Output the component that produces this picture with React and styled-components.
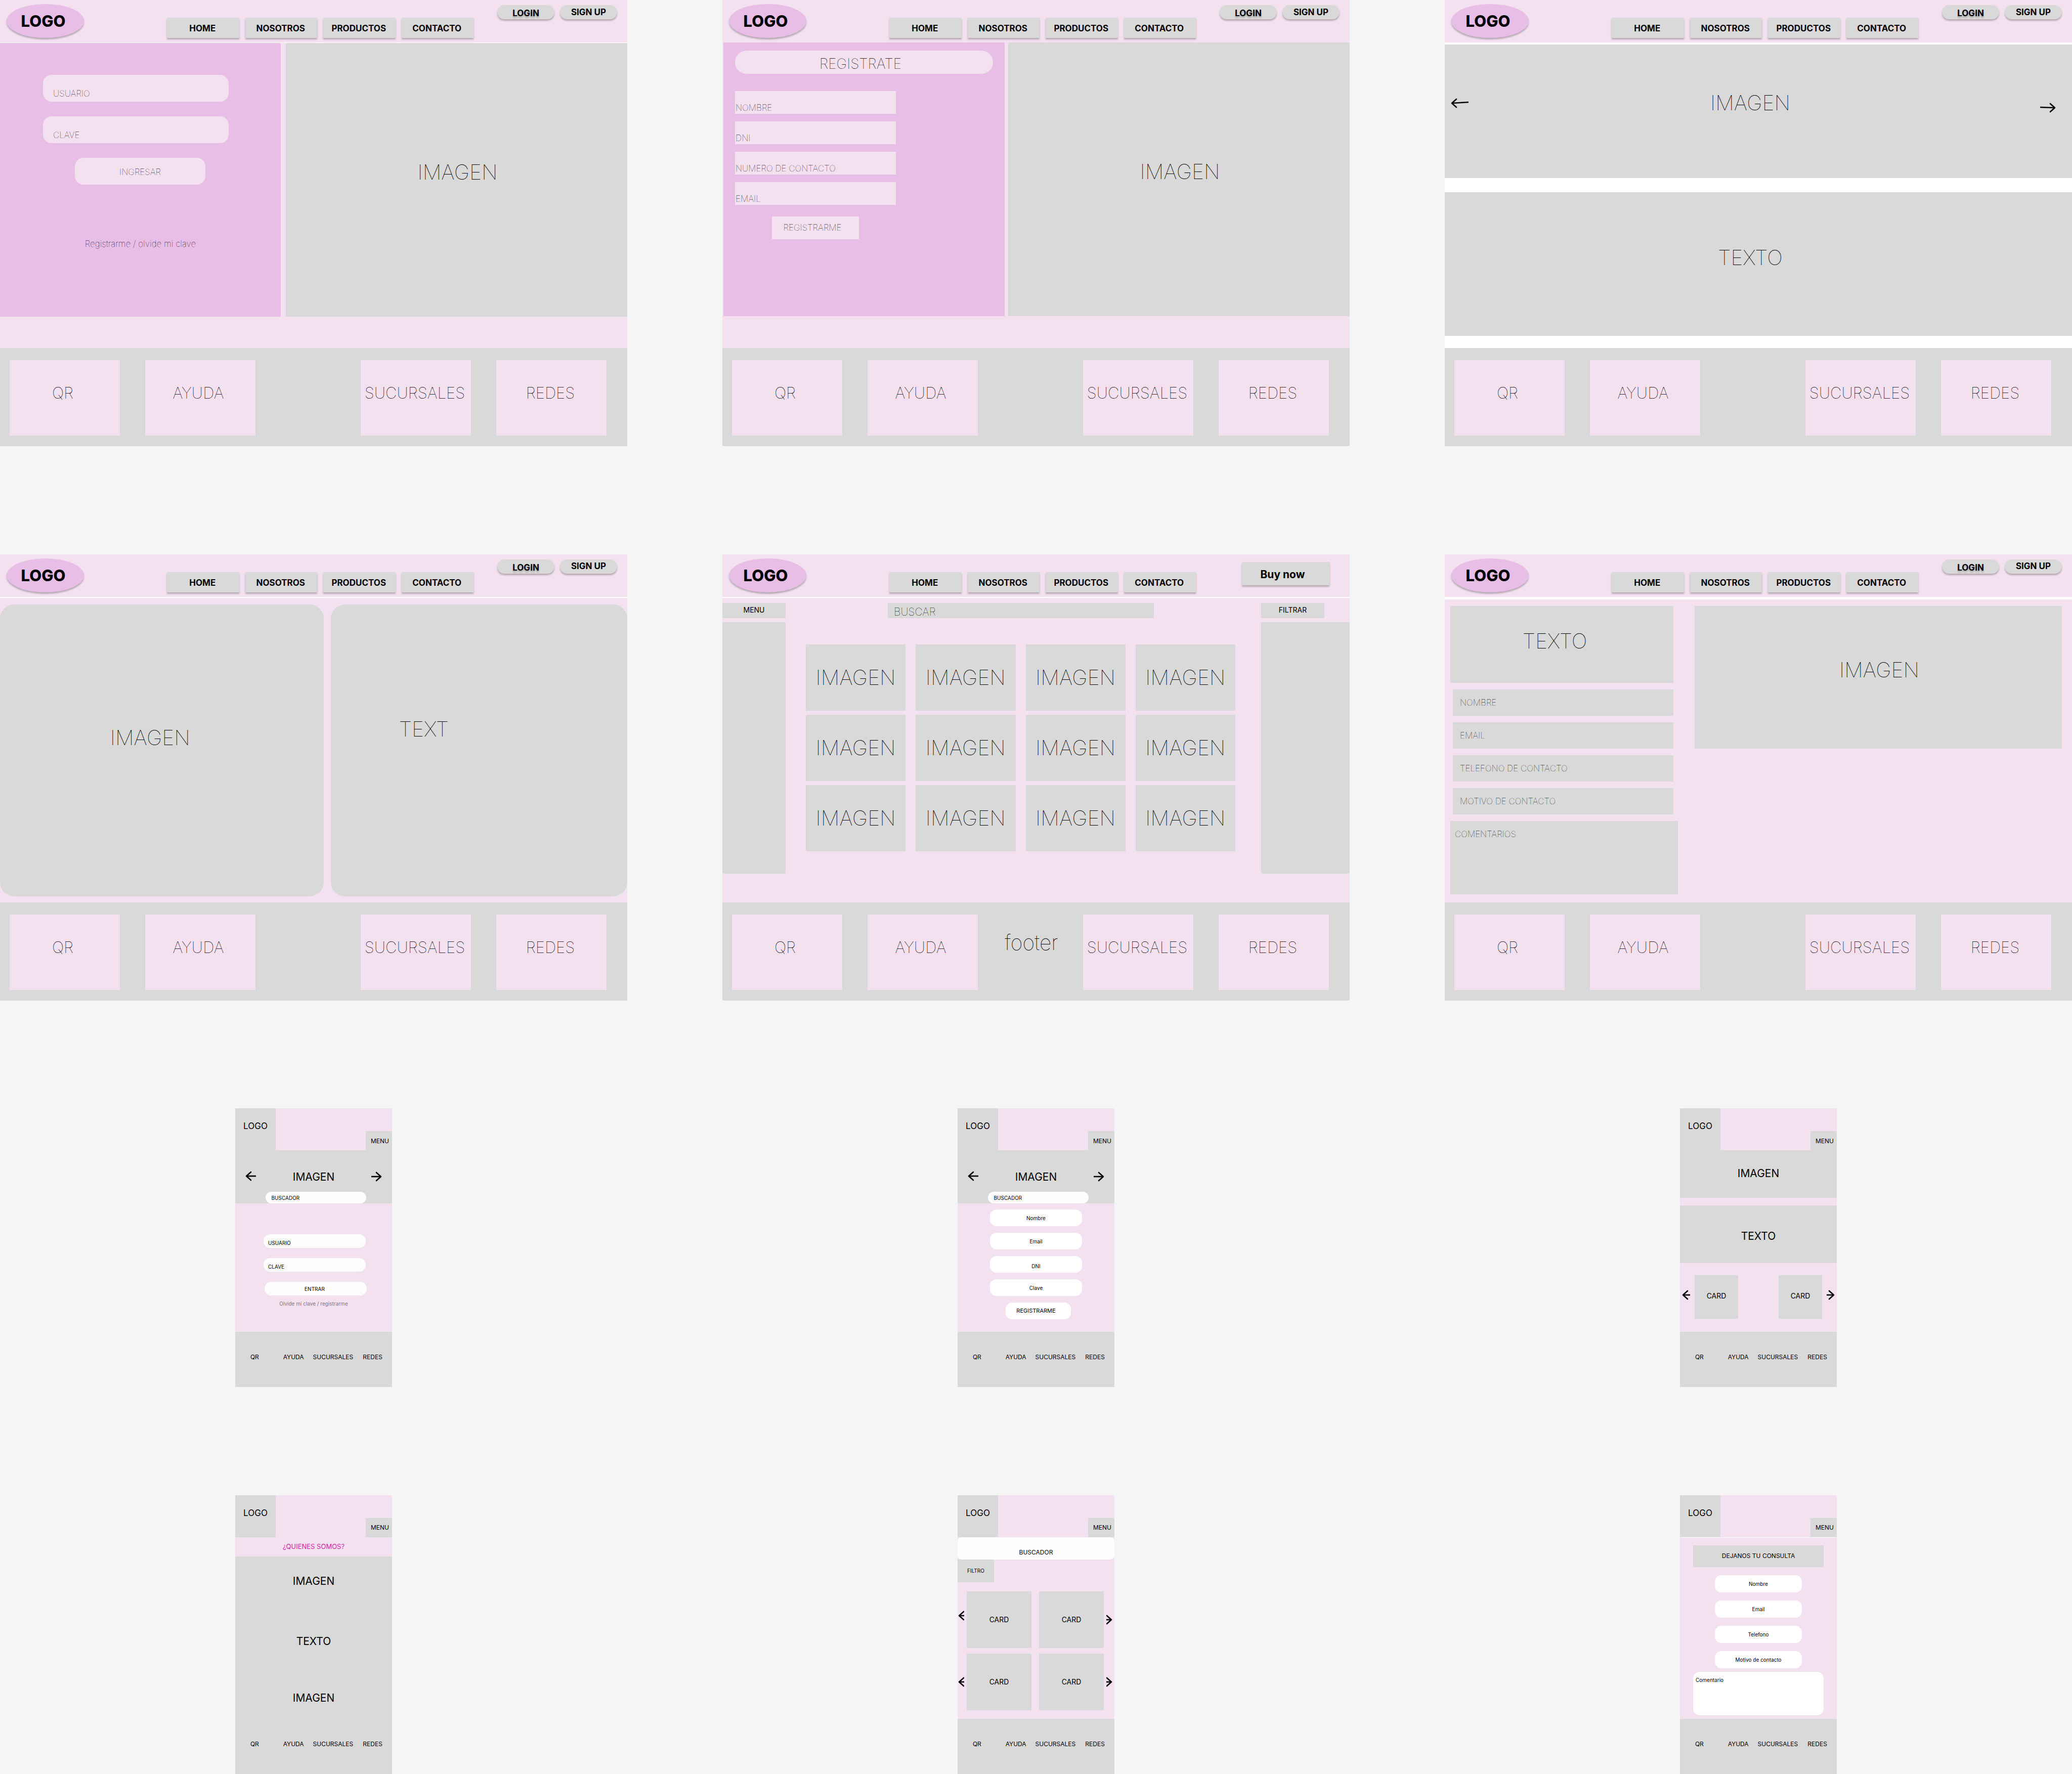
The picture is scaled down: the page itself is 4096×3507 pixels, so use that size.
import React from "react";
import styled, { createGlobalStyle, css } from "styled-components";

const color = {
  canvas: "#f5f5f5",
  pink: "#f4e1f0",
  orchid: "#e8bde6",
  gray: "#d9d9d9",
  magenta: "#d21da5",
  white: "#ffffff",
  ink: "#000000",
};

const shadow = "0 3px 3px rgba(0, 0, 0, 0.25)";

const GlobalStyle = createGlobalStyle`
  *, *::before, *::after { box-sizing: border-box; }
  body {
    margin: 0;
    background: ${color.canvas};
    color: ${color.ink};
    font-family: Inter, "Liberation Sans", sans-serif;
    line-height: 1.2;
  }
  p, h1, h2 { margin: 0; font-weight: inherit; font-size: inherit; }
  a { color: inherit; text-decoration: none; }
  button, input, textarea {
    font: inherit;
    color: inherit;
    border: 0;
    border-radius: 0;
    margin: 0;
    padding: 0;
    background: none;
  }
  input::-webkit-search-cancel-button { display: none; }
`;

/* ---------- shared canvas ---------- */

const Board = styled.div`
  min-height: 100vh;
  display: grid;
  grid-template-columns: repeat(3, minmax(0, 1fr));
  column-gap: 188px;
  align-content: space-between;
  justify-items: center;
`;

const placeholderInk = css`
  &::placeholder {
    color: ${color.ink};
    opacity: 1;
  }
`;

/* ---------- desktop parts ---------- */

const Desktop = styled.section`
  width: 100%;
  min-height: 882px;
  display: flex;
  flex-direction: column;
  background: ${(p) => p.$fill || color.pink};
`;

const TopBar = styled.header`
  display: flex;
  align-items: flex-start;
  box-sizing: content-box;
  height: 76px;
  padding: 8px 20px 0 13px;
  background: ${color.pink};
  border-bottom: ${(p) => p.$rule}px solid ${color.white};
`;

const Logo = styled.a`
  display: flex;
  align-items: center;
  justify-content: center;
  width: 153px;
  height: 67px;
  padding-right: 8px;
  border-radius: 50%;
  background: ${color.orchid};
  box-shadow: ${shadow};
  font-size: 31px;
  font-weight: 800;
`;

const Nav = styled.nav`
  display: grid;
  grid-template-columns: repeat(4, 1fr);
  column-gap: 12px;
  flex: 0 1 606px;
  margin: 27px 0 0 164px;
`;

const NavLink = styled.a`
  display: flex;
  align-items: center;
  justify-content: center;
  height: 40px;
  padding: 3px 2px 0 0;
  background: ${color.gray};
  box-shadow: ${shadow};
  font-size: 17px;
  font-weight: 700;
`;

const Session = styled.div`
  display: flex;
  gap: 11px;
  margin: 2px 0 0 auto;
`;

const Pill = styled.button`
  width: 113px;
  height: 28px;
  border-radius: 14px;
  background: ${color.gray};
  box-shadow: ${shadow};
  font-size: 17px;
  font-weight: 700;
  ${(p) =>
    p.$raised &&
    css`
      padding-top: 5px;
      text-shadow: ${shadow};
    `}
`;

const BuyButton = styled.button`
  width: 173px;
  height: 46px;
  margin: 7px 20px 0 auto;
  padding: 3px 12px 0 0;
  background: ${color.gray};
  box-shadow: ${shadow};
  font-size: 21px;
  font-weight: 700;
`;

const Block = styled.div`
  display: flex;
  align-items: center;
  justify-content: center;
  flex: ${(p) => p.$grow || "none"};
  height: ${(p) => (p.$height ? `${p.$height}px` : "auto")};
  padding: ${(p) => p.$pad || "0"};
  border-radius: ${(p) => p.$radius || 0}px;
  background: ${color.gray};
`;

const Display = styled.p`
  font-size: 41px;
  font-weight: 100;
`;

const BottomBar = styled.footer`
  display: flex;
  justify-content: space-between;
  align-items: flex-start;
  height: 194px;
  margin-top: auto;
  padding: 24px 41px 0 19px;
  background: ${color.gray};
`;

const TileGroup = styled.div`
  display: flex;
  gap: 50px;
  --inset: ${(p) => p.$inset}px;
`;

const Tile = styled.a`
  display: flex;
  align-items: center;
  justify-content: center;
  width: 218px;
  height: 149px;
  padding: 0 var(--inset) 20px 0;
  background: ${color.pink};
  font-size: 31px;
  font-weight: 100;
`;

const FooterWord = styled(Display)`
  padding: 31px 0 0 4px;
`;

const Split = styled.main`
  display: flex;
  gap: ${(p) => p.$gap}px;
  padding: ${(p) => p.$pad || "0"};
`;

const Halves = styled.main`
  display: grid;
  grid-template-columns: minmax(0, 12fr) minmax(0, 11fr);
  column-gap: 14px;
  padding-top: 13px;
`;

const Panel = styled.form`
  display: flex;
  flex-direction: column;
  align-items: flex-start;
  flex: 0 0 ${(p) => p.$width}px;
  min-height: 541px;
  padding: ${(p) => p.$pad};
  background: ${color.orchid};
`;

const Stack = styled.div`
  display: flex;
  flex-direction: column;
  gap: ${(p) => p.$gap}px;
`;

const Input = styled.input`
  width: ${(p) => p.$width}px;
  height: ${(p) => p.$height}px;
  padding: ${(p) => p.$pad};
  border-radius: ${(p) => p.$radius || 0}px;
  background: ${(p) => p.$fill || color.pink};
  font-size: 17px;
  font-weight: 100;
  ${placeholderInk}
`;

const FormButton = styled.button`
  width: ${(p) => p.$width}px;
  height: ${(p) => p.$height}px;
  margin: ${(p) => p.$margin};
  padding: ${(p) => p.$pad || "0"};
  border-radius: ${(p) => p.$radius || 0}px;
  background: ${color.pink};
  font-size: 17px;
  font-weight: 100;
`;

const HelpLink = styled.a`
  margin: 107px auto 0;
  font-size: 17px;
  font-weight: 100;
`;

const FormTitle = styled.h2`
  display: flex;
  align-items: center;
  justify-content: center;
  width: 510px;
  height: 46px;
  margin-bottom: 34px;
  padding: 8px 14px 0 0;
  border-radius: 23px;
  background: ${color.pink};
  font-size: 28px;
  font-weight: 100;
`;

const Banners = styled.main`
  display: flex;
  flex-direction: column;
  gap: 28px;
`;

const Carousel = styled(Block)`
  justify-content: space-between;
  & > p {
    flex: 1;
    text-align: center;
    padding-right: 16px;
  }
`;

const ArrowButton = styled.button`
  display: flex;
  line-height: 0;
`;

const Shop = styled.main`
  display: grid;
  grid-template-columns: 125px 1fr 175px;
  gap: 8px 0;
  padding-top: 10px;
`;

const SmallButton = styled.button`
  width: 125px;
  height: 30px;
  background: ${color.gray};
  font-size: 14px;
`;

const Search = styled.input`
  width: 526px;
  height: 30px;
  margin-left: 202px;
  padding: 5px 12px 0;
  background: ${color.gray};
  font-size: 21px;
  font-weight: 100;
  ${placeholderInk}
`;

const Aside = styled.aside`
  height: 497px;
  background: ${color.gray};
`;

const Products = styled.div`
  display: grid;
  grid-template-columns: repeat(4, 1fr);
  align-content: start;
  gap: 8px 20px;
  padding: 44px 51px 0 40px;
`;

const ContactForm = styled.form`
  display: flex;
  flex-direction: column;
  gap: 13px;
  flex: 0 0 450px;
`;

const Intro = styled(Block)`
  margin-right: 9px;
`;

const ContactInput = styled(Input)`
  margin-left: 5px;
`;

const Comments = styled.textarea`
  height: 145px;
  padding: 16px 9px;
  background: ${color.gray};
  font-size: 17px;
  font-weight: 100;
  resize: none;
  ${placeholderInk}
`;

/* ---------- mobile parts ---------- */

const Mobile = styled.section`
  width: 310px;
  min-height: 551px;
  display: flex;
  flex-direction: column;
  background: ${color.pink};
`;

const MobileBar = styled.header`
  display: flex;
  align-items: flex-end;
  justify-content: space-between;
  border-bottom: ${(p) => p.$rule || 0}px solid ${color.white};
`;

const MobileLogo = styled.a`
  display: flex;
  align-items: center;
  justify-content: center;
  width: 80px;
  height: 83px;
  padding-bottom: 13px;
  background: ${color.gray};
  font-size: 17px;
`;

const MobileMenu = styled.button`
  width: 52px;
  height: 38px;
  padding: 1px 0 0 4px;
  background: ${color.gray};
  font-size: 12px;
`;

const MobileFooter = styled.footer`
  display: grid;
  grid-template-columns: repeat(4, 1fr);
  align-items: center;
  justify-items: center;
  height: 109px;
  margin-top: auto;
  padding-bottom: 9px;
  background: ${color.gray};
  font-size: 12px;
`;

const Heading = styled.p`
  font-size: 21px;
`;

const Hero = styled.div`
  display: flex;
  flex-direction: column;
  align-items: center;
  justify-content: space-between;
  height: 105px;
  padding-top: 32px;
  background: ${color.gray};
`;

const HeroRow = styled.div`
  display: flex;
  align-items: center;
  justify-content: space-between;
  align-self: stretch;
  padding: 0 20px;
`;

const MobileInput = styled.input`
  width: ${(p) => p.$width}px;
  height: ${(p) => p.$height}px;
  padding: ${(p) => (p.$low ? "7px" : "0")} ${(p) => p.$inset || 8}px 0;
  border-radius: 13px;
  background: ${(p) => p.$fill || color.white};
  font-size: 10px;
  text-align: ${(p) => p.$align || "left"};
  ${placeholderInk}
`;

const HeroSearch = styled(MobileInput)`
  margin-left: 8px;
`;

const MobileForm = styled.form`
  display: flex;
  flex-direction: column;
  align-items: center;
  gap: ${(p) => p.$gap}px;
  padding: ${(p) => p.$pad};
`;

const MobileSubmit = styled.button`
  width: ${(p) => p.$width}px;
  height: ${(p) => p.$height}px;
  margin-left: ${(p) => p.$inset}px;
  padding-right: ${(p) => p.$inset}px;
  border-radius: 13px;
  background: ${(p) => p.$fill || color.white};
  font-size: ${(p) => p.$size || 10}px;
`;

const MobileHelp = styled.a`
  margin: -10px 4px 0 0;
  font-size: 10px;
  opacity: 0.5;
`;

const Cards = styled.div`
  display: flex;
  align-items: center;
  justify-content: space-between;
  padding: ${(p) => p.$pad};
`;

const Card = styled.div`
  display: flex;
  align-items: center;
  justify-content: center;
  width: ${(p) => p.$width}px;
  height: ${(p) => p.$height}px;
  padding-bottom: ${(p) => p.$lift || 0}px;
  background: ${color.gray};
  font-size: 14px;
`;

const CardPair = styled.div`
  display: flex;
  gap: ${(p) => p.$gap}px;
`;

const MobileBanners = styled.div`
  display: flex;
  flex-direction: column;
  gap: 15px;
`;

const About = styled.h2`
  display: flex;
  align-items: center;
  justify-content: center;
  height: 38px;
  color: ${color.magenta};
  font-size: 13px;
`;

const MobileSearch = styled.input`
  height: 44px;
  padding-top: 16px;
  border-radius: 8px;
  background: #fffdfd;
  font-size: 12px;
  text-align: center;
  ${placeholderInk}
`;

const Filter = styled.button`
  width: 72px;
  height: 45px;
  margin-bottom: 18px;
  background: ${color.gray};
  font-size: 10px;
`;

const CardRows = styled.div`
  display: flex;
  flex-direction: column;
  gap: 11px;
`;

const Ask = styled.h2`
  display: flex;
  align-items: center;
  justify-content: center;
  width: 258px;
  height: 43px;
  margin: 15px auto 0;
  background: ${color.gray};
  font-size: 12px;
`;

const MobileComment = styled.textarea`
  width: 258px;
  height: 86px;
  margin-top: -9px;
  padding: 10px 5px;
  border-radius: 13px;
  background: ${color.white};
  font-size: 10px;
  resize: none;
  ${placeholderInk}
`;

/* ---------- components ---------- */

/* Open-headed arrow; `shift` moves the drawing up or down in its own box. */
function Arrow({ dir, length = 20, shift = 0, tilt = 0 }) {
  const mid = 20 + shift;
  const left = dir === "left";
  const tip = left ? 2 : length - 2;
  const tail = left ? length : 0;
  const back = left ? tip + 9 : tip - 9;
  return (
    <svg width={length} height="40" viewBox={`0 0 ${length} 40`} fill="none" stroke="#000" strokeWidth="2.6">
      <path d={`M${tail} ${mid - tilt}L${tip} ${mid}`} />
      <path d={`M${back} ${mid - 8}L${tip} ${mid}L${back} ${mid + 8}`} strokeLinecap="round" strokeLinejoin="round" />
    </svg>
  );
}

function Slide({ dir, ...rest }) {
  return (
    <ArrowButton type="button" aria-label={dir === "left" ? "Anterior" : "Siguiente"}>
      <Arrow dir={dir} {...rest} />
    </ArrowButton>
  );
}

function Header({ rule = 0, shop = false }) {
  return (
    <TopBar $rule={rule}>
      <Logo href="#inicio">LOGO</Logo>
      <Nav>
        {["HOME", "NOSOTROS", "PRODUCTOS", "CONTACTO"].map((name) => (
          <NavLink key={name} href={`#${name.toLowerCase()}`}>
            {name}
          </NavLink>
        ))}
      </Nav>
      {shop ? (
        <BuyButton type="button">Buy now</BuyButton>
      ) : (
        <Session>
          <Pill type="button" $raised>
            LOGIN
          </Pill>
          <Pill type="button">SIGN UP</Pill>
        </Session>
      )}
    </TopBar>
  );
}

function Footer({ word }) {
  return (
    <BottomBar>
      <TileGroup $inset={8}>
        <Tile href="#qr">QR</Tile>
        <Tile href="#ayuda">AYUDA</Tile>
      </TileGroup>
      {word && <FooterWord>{word}</FooterWord>}
      <TileGroup $inset={4}>
        <Tile href="#sucursales">SUCURSALES</Tile>
        <Tile href="#redes">REDES</Tile>
      </TileGroup>
    </BottomBar>
  );
}

function MobileTop({ rule }) {
  return (
    <MobileBar $rule={rule}>
      <MobileLogo href="#inicio">LOGO</MobileLogo>
      <MobileMenu type="button">MENU</MobileMenu>
    </MobileBar>
  );
}

function MobileBottom() {
  return (
    <MobileFooter>
      {["QR", "AYUDA", "SUCURSALES", "REDES"].map((name) => (
        <a key={name} href={`#${name.toLowerCase()}`}>
          {name}
        </a>
      ))}
    </MobileFooter>
  );
}

function MobileHero() {
  return (
    <Hero>
      <HeroRow>
        <Slide dir="left" length={21} shift={-1} />
        <Heading>IMAGEN</Heading>
        <Slide dir="right" length={21} />
      </HeroRow>
      <HeroSearch
        type="search"
        aria-label="Buscador"
        placeholder="BUSCADOR"
        $width={199}
        $height={23}
        $inset={12}
        $fill="#fdfdfd"
      />
    </Hero>
  );
}

function LoginDesktop() {
  const field = { $width: 367, $height: 53, $pad: "20px 20px 0", $radius: 17 };
  return (
    <Desktop>
      <Header rule={1} />
      <Split $gap={10}>
        <Panel $width={555} $pad="63px 85px 0">
          <Stack $gap={29}>
            <Input aria-label="Usuario" placeholder="USUARIO" {...field} />
            <Input type="password" aria-label="Clave" placeholder="CLAVE" {...field} />
          </Stack>
          <FormButton type="button" $width={258} $height={53} $radius={17} $margin="29px 0 0 63px" $pad="4px 0 0">
            INGRESAR
          </FormButton>
          <HelpLink href="#registro">Registrarme / olvide mi clave</HelpLink>
        </Panel>
        <Block $grow="1" $pad="0 0 30px 4px">
          <Display>IMAGEN</Display>
        </Block>
      </Split>
      <Footer />
    </Desktop>
  );
}

function RegisterDesktop() {
  const field = { $width: 318, $height: 45, $pad: "20px 1px 0" };
  return (
    <Desktop>
      <Header />
      <Split $gap={7} $pad="0 0 0 2px">
        <Panel $width={556} $pad="16px 23px 0">
          <FormTitle>REGISTRATE</FormTitle>
          <Stack $gap={15}>
            <Input aria-label="Nombre" placeholder="NOMBRE" {...field} />
            <Input aria-label="DNI" placeholder="DNI" {...field} />
            <Input type="tel" aria-label="Numero de contacto" placeholder="NUMERO DE CONTACTO" {...field} />
            <Input type="email" aria-label="Email" placeholder="EMAIL" {...field} />
          </Stack>
          <FormButton type="button" $width={172} $height={45} $margin="23px 0 0 73px" $pad="0 12px 0 0">
            REGISTRARME
          </FormButton>
        </Panel>
        <Block $grow="1" $pad="0 0 30px 4px">
          <Display>IMAGEN</Display>
        </Block>
      </Split>
      <Footer />
    </Desktop>
  );
}

function HomeDesktop() {
  return (
    <Desktop $fill={color.white}>
      <Header rule={4} />
      <Banners>
        <Carousel $height={264} $pad="0 32px 32px 12px">
          <Slide dir="left" length={35} tilt={2} />
          <Display>IMAGEN</Display>
          <Slide dir="right" length={31} shift={9} tilt={1} />
        </Carousel>
        <Block $height={284} $pad="0 32px 24px 0">
          <Display>TEXTO</Display>
        </Block>
      </Banners>
      <Footer />
    </Desktop>
  );
}

function AboutDesktop() {
  return (
    <Desktop>
      <Header rule={2} />
      <Halves>
        <Block $height={577} $radius={28} $pad="0 46px 50px 0">
          <Display>IMAGEN</Display>
        </Block>
        <Block $height={577} $radius={28} $pad="0 218px 84px 0">
          <Display>TEXT</Display>
        </Block>
      </Halves>
      <Footer />
    </Desktop>
  );
}

function ShopDesktop() {
  return (
    <Desktop>
      <Header rule={2} shop />
      <Shop>
        <SmallButton type="button">MENU</SmallButton>
        <Search type="search" aria-label="Buscar" placeholder="BUSCAR" />
        <SmallButton type="button">FILTRAR</SmallButton>
        <Aside aria-label="Menu" />
        <Products>
          {Array.from({ length: 12 }, (_, i) => (
            <Block key={i} $height={131}>
              <Display>IMAGEN</Display>
            </Block>
          ))}
        </Products>
        <Aside aria-label="Filtros" />
      </Shop>
      <Footer word="footer" />
    </Desktop>
  );
}

function ContactDesktop() {
  const field = { $width: 436, $height: 52, $pad: "0 14px", $fill: color.gray };
  return (
    <Desktop>
      <Header rule={5} />
      <Split $gap={33} $pad="13px 20px 0 11px">
        <ContactForm>
          <Intro $height={152} $pad="0 28px 12px 0">
            <Display>TEXTO</Display>
          </Intro>
          <ContactInput aria-label="Nombre" placeholder="NOMBRE" {...field} />
          <ContactInput type="email" aria-label="Email" placeholder="EMAIL" {...field} />
          <ContactInput type="tel" aria-label="Telefono de contacto" placeholder="TELEFONO DE CONTACTO" {...field} />
          <ContactInput aria-label="Motivo de contacto" placeholder="MOTIVO DE CONTACTO" {...field} />
          <Comments aria-label="Comentarios" placeholder="COMENTARIOS" />
        </ContactForm>
        <Block $grow="1" $height={282} $pad="0 0 28px 4px">
          <Display>IMAGEN</Display>
        </Block>
      </Split>
      <Footer />
    </Desktop>
  );
}

function LoginMobile() {
  const field = { $width: 202, $height: 27, $fill: "#fcfcfc", $inset: 9, $low: true };
  return (
    <Mobile>
      <MobileTop />
      <MobileHero />
      <MobileForm $gap={20} $pad="61px 0 0 4px">
        <MobileInput aria-label="Usuario" placeholder="USUARIO" {...field} />
        <MobileInput type="password" aria-label="Clave" placeholder="CLAVE" {...field} />
        <MobileSubmit type="button" $width={202} $height={27} $inset={4} $fill="#fcfcfc">
          ENTRAR
        </MobileSubmit>
        <MobileHelp href="#registro">Olvide mi clave / registrarme</MobileHelp>
      </MobileForm>
      <MobileBottom />
    </Mobile>
  );
}

function RegisterMobile() {
  const field = { $width: 182, $height: 33, $align: "center" };
  return (
    <Mobile>
      <MobileTop />
      <MobileHero />
      <MobileForm $gap={13} $pad="12px 0 0">
        <MobileInput aria-label="Nombre" placeholder="Nombre" {...field} />
        <MobileInput type="email" aria-label="Email" placeholder="Email" {...field} />
        <MobileInput aria-label="DNI" placeholder="DNI" $low {...field} />
        <MobileInput type="password" aria-label="Clave" placeholder="Clave" {...field} />
        <MobileSubmit type="button" $width={129} $height={33} $inset={8} $size={11}>
          REGISTRARME
        </MobileSubmit>
      </MobileForm>
      <MobileBottom />
    </Mobile>
  );
}

function HomeMobile() {
  return (
    <Mobile>
      <MobileTop />
      <MobileBanners>
        <Block $height={94} $pad="0 0 4px">
          <Heading>IMAGEN</Heading>
        </Block>
        <Block $height={114} $pad="6px 0 0">
          <Heading>TEXTO</Heading>
        </Block>
      </MobileBanners>
      <Cards $pad="24px 4px 0">
        <Slide dir="left" length={16} shift={-4} />
        <CardPair $gap={80}>
          <Card $width={86} $height={86} $lift={4}>
            CARD
          </Card>
          <Card $width={86} $height={86} $lift={4}>
            CARD
          </Card>
        </CardPair>
        <Slide dir="right" length={16} shift={-4} />
      </Cards>
      <MobileBottom />
    </Mobile>
  );
}

function AboutMobile() {
  return (
    <Mobile>
      <MobileTop />
      <About>¿QUIENES SOMOS?</About>
      <Block $height={97}>
        <Heading>IMAGEN</Heading>
      </Block>
      <Block $height={141}>
        <Heading>TEXTO</Heading>
      </Block>
      <Block $grow="1">
        <Heading>IMAGEN</Heading>
      </Block>
      <MobileBottom />
    </Mobile>
  );
}

function ShopMobile() {
  return (
    <Mobile>
      <MobileTop />
      <MobileSearch type="search" aria-label="Buscador" placeholder="BUSCADOR" />
      <Filter type="button">FILTRO</Filter>
      <CardRows>
        {[-8, 0].map((shift) => (
          <Cards key={shift} $pad="0 4px 0 1px">
            <Slide dir="left" length={12} shift={shift} />
            <CardPair $gap={15}>
              <Card $width={128} $height={112}>
                CARD
              </Card>
              <Card $width={128} $height={112}>
                CARD
              </Card>
            </CardPair>
            <Slide dir="right" length={12} />
          </Cards>
        ))}
      </CardRows>
      <MobileBottom />
    </Mobile>
  );
}

function ContactMobile() {
  const field = { $width: 172, $height: 34, $align: "center" };
  return (
    <Mobile>
      <MobileTop rule={1} />
      <Ask>DEJANOS TU CONSULTA</Ask>
      <MobileForm $gap={16} $pad="16px 0 0">
        <MobileInput aria-label="Nombre" placeholder="Nombre" {...field} />
        <MobileInput type="email" aria-label="Email" placeholder="Email" {...field} />
        <MobileInput type="tel" aria-label="Telefono" placeholder="Telefono" {...field} />
        <MobileInput aria-label="Motivo de contacto" placeholder="Motivo de contacto" {...field} />
        <MobileComment aria-label="Comentario" placeholder="Comentario" />
      </MobileForm>
      <MobileBottom />
    </Mobile>
  );
}

export default function App() {
  return (
    <>
      <GlobalStyle />
      <Board>
        <LoginDesktop />
        <RegisterDesktop />
        <HomeDesktop />
        <AboutDesktop />
        <ShopDesktop />
        <ContactDesktop />
        <LoginMobile />
        <RegisterMobile />
        <HomeMobile />
        <AboutMobile />
        <ShopMobile />
        <ContactMobile />
      </Board>
    </>
  );
}
